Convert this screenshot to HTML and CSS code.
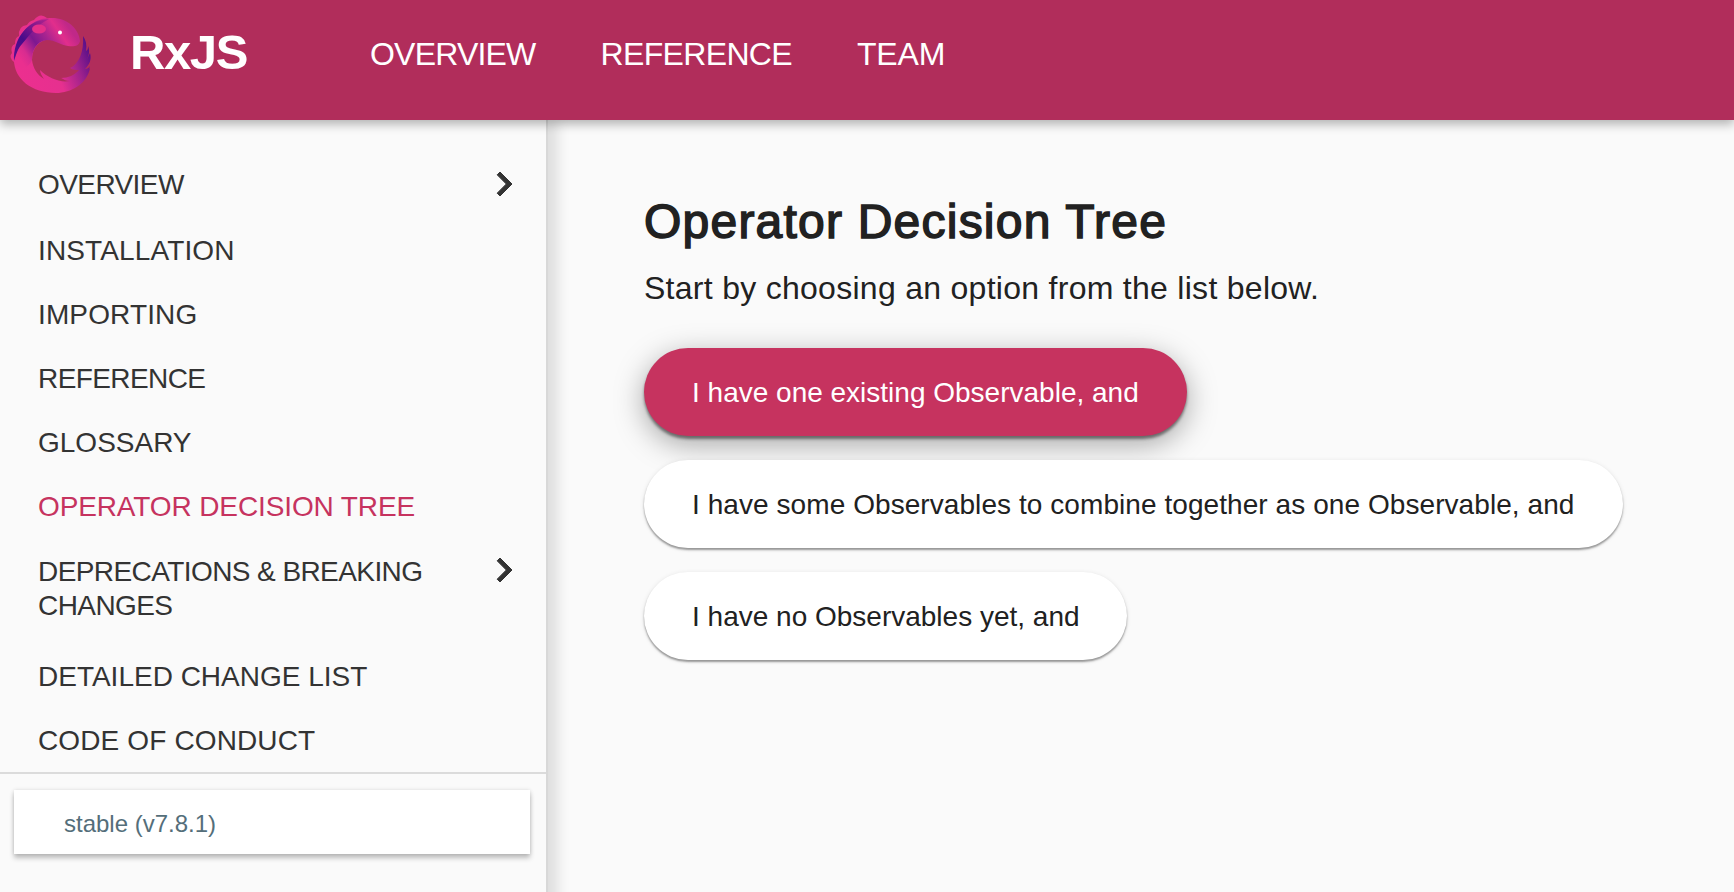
FILE: index.html
```html
<!DOCTYPE html>
<html lang="en">
<head>
<meta charset="utf-8">
<title>RxJS - Operator Decision Tree</title>
<link rel="stylesheet" href="styles.css">
</head>
<body>
<header class="topbar">
  <a class="brand">
    <svg class="brand-mark" width="96" height="92" viewBox="0 0 96 92">
      <defs>
        <linearGradient id="body" gradientUnits="userSpaceOnUse" x1="14" y1="66" x2="84" y2="40">
          <stop offset="0" stop-color="#ec2f8f"/><stop offset=".5" stop-color="#e6308f"/><stop offset=".78" stop-color="#a0228c"/><stop offset="1" stop-color="#5a1089"/>
        </linearGradient>
        <linearGradient id="back" gradientUnits="userSpaceOnUse" x1="10" y1="52" x2="46" y2="12">
          <stop offset="0" stop-color="#5a1090"/><stop offset=".4" stop-color="#470b8a"/><stop offset="1" stop-color="#b5248e"/>
        </linearGradient>
        <linearGradient id="head" gradientUnits="userSpaceOnUse" x1="20" y1="57" x2="68" y2="24">
          <stop offset="0" stop-color="#ea2f8f"/><stop offset=".14" stop-color="#d82c90"/><stop offset=".38" stop-color="#7c1890"/><stop offset=".6" stop-color="#a82490"/><stop offset=".82" stop-color="#e22e8c"/><stop offset="1" stop-color="#c02888"/>
        </linearGradient>
      </defs>
      <path fill="#e8308c" d="M10 54 Q4 49 8 45 Q6 38 11 36 Q11 29 15 28 Q14 18 23 17 Q25 13 30 12 Q36 4 43 10 L30 24 L12 50Z"/>
      <path fill="url(#body)" d="M10 52 C10 32 20 18 36 18 L50 31 C36 30 28 39 28 52 C29 60 33 67 40 71 C38 68 36 65 36 62 C44 70 56 75 66 73 C62 73 60 72 58 70 C70 71 80 67 86 60 C83 76 67 85 52 85 C28 85 10 71 10 52Z"/>
      <path fill="url(#body)" d="M57 70 C64 70 71 67 75 62 C72 62 69 62 66 60 C75 56 80 44 79 28 C82 32 83 37 82 43 C84 42 84 40 84 38 C86 43 85 47 83 51 L86 45 C88 52 85 57 81 61 C83 61 85 60 86 58 C83 71 72 75 57 70Z"/>
      <path fill="url(#head)" d="M10 54 C8 29 27 10 46 10 C62 9 75 20 76 33 C75 38 70 39 64 38 C57 37 51 32 43 32 C32 33 28 43 28 52 C24 62 14 62 10 54Z"/>
      <path fill="url(#back)" d="M10 53 C9 30 24 12 45 11 C31 18 27 26 18 36 C14 40 12 47 10 53Z"/>
      <ellipse cx="35" cy="21" rx="7" ry="4.500" fill="#e52f8b"/>
      <circle cx="56" cy="24.500" r="2" fill="#fff"/>
    </svg>
    <span class="brand-name">RxJS</span>
  </a>
  <nav class="topnav">
    <a class="t-overview">OVERVIEW</a>
    <a class="t-reference">REFERENCE</a>
    <a class="t-team">TEAM</a>
  </nav>
</header>
<div class="layout">
  <aside class="sidebar">
    <nav class="menu">
      <a class="item branch tight"><span>OVERVIEW</span><svg class="chevron" width="48" height="48" viewBox="0 0 24 24"><path d="M10 6L8.590 7.410 13.170 12l-4.580 4.590L10 18l6-6z"/></svg></a>
      <a class="item loose">INSTALLATION</a>
      <a class="item loose">IMPORTING</a>
      <a class="item tight">REFERENCE</a>
      <a class="item">GLOSSARY</a>
      <a class="item selected">OPERATOR DECISION TREE</a>
      <a class="item branch tall tight"><span>DEPRECATIONS &amp; BREAKING<br>CHANGES</span><svg class="chevron" width="48" height="48" viewBox="0 0 24 24"><path d="M10 6L8.590 7.410 13.170 12l-4.580 4.590L10 18l6-6z"/></svg></a>
      <a class="item">DETAILED CHANGE LIST</a>
      <a class="item loose">CODE OF CONDUCT</a>
    </nav>
    <div class="version"><div class="version-select">stable (v7.8.1)</div></div>
  </aside>
  <main class="content">
    <h1>Operator Decision Tree</h1>
    <p class="intro">Start by choosing an option from the list below.</p>
    <div class="options">
      <button class="option active">I have one existing Observable, and</button>
      <button class="option wide">I have some Observables to combine together as one Observable, and</button>
      <button class="option short">I have no Observables yet, and</button>
    </div>
  </main>
</div>
</body>
</html>
```
FILE: styles.css
```css
* { box-sizing: border-box; }
body {
  margin: 0;
  height: 892px;
  overflow: hidden;
  display: flex;
  flex-direction: column;
  background: #fafafa;
  color: #212121;
  font-family: "Liberation Sans", Arial, sans-serif;
}
.topbar {
  position: relative;
  z-index: 2;
  flex: none;
  height: 120px;
  display: flex;
  background: #b12d5b;
  color: #fff;
  box-shadow: 0 4px 10px rgba(0, 0, 0, .3);
}
.brand { display: flex; width: 370px; padding: 8px 0 0 4px; }
.brand-name { margin: 16px 0 0 30px; font-size: 49px; line-height: 56px; font-weight: 700; letter-spacing: -1.400px; }
.topnav { display: flex; gap: 65px; padding-top: 36px; font-size: 32px; line-height: 36px; }
.t-overview { letter-spacing: -.8px; }
.t-reference { letter-spacing: -.65px; }
.t-team { letter-spacing: -.2px; }
.layout { flex: 1; display: flex; min-height: 0; }
.sidebar {
  flex: none;
  width: 548px;
  margin-bottom: -40px;
  display: flex;
  flex-direction: column;
  border-right: 2px solid #d8d8d8;
  box-shadow: 10px 0 12px rgba(0, 0, 0, .11);
}
.menu { flex: none; height: 652px; padding-top: 33px; color: #333; }
.item {
  display: flex;
  height: 64px;
  padding: 16px 18px 0 38px;
  font-size: 28px;
  line-height: 32px;
}
.branch { height: 66px; justify-content: space-between; }
.tall { height: 106px; line-height: 34px; }
.tight { letter-spacing: -.58px; }
.loose { letter-spacing: .13px; }
.chevron { margin-top: -9px; fill: #333; stroke: #333; stroke-width: .5; }
.selected { color: #c6335f; letter-spacing: -.12px; }
.version { border-top: 2px solid #dbdbdb; padding: 16px 16px 0 14px; }
.version-select {
  height: 64px;
  padding-left: 50px;
  background: #fff;
  color: #546e7a;
  font-size: 24px;
  line-height: 68px;
  box-shadow: 0 4px 5px rgba(0, 0, 0, .24), 0 0 4px rgba(0, 0, 0, .12);
}
.content { padding: 73px 0 0 96px; }
h1 { margin: 0; font-size: 48px; line-height: 58px; font-weight: 400; -webkit-text-stroke: 1.500px #212121; letter-spacing: 1.220px; }
.intro { margin: 14px 0 0; font-size: 32px; line-height: 46px; letter-spacing: .28px; }
.options { margin-top: 37px; display: flex; flex-direction: column; align-items: flex-start; gap: 24px; }
.option {
  width: 543px;
  height: 88px;
  padding: 2px 0 0 48px;
  border: 0;
  border-radius: 44px;
  background: #fff;
  color: #212121;
  font: 28px/86px "Liberation Sans", Arial, sans-serif;
  text-align: left;
  white-space: nowrap;
  box-shadow: 0 2px 2px rgba(0, 0, 0, .36), 0 1px 5px rgba(0, 0, 0, .1);
}
.active {
  background: #c6335f;
  color: #fff;
  box-shadow: 0 3px 3px rgba(0, 0, 0, .45), 0 8px 30px rgba(0, 0, 0, .35);
}
.wide { width: 979px; letter-spacing: .07px; }
.short { width: 483px; }
```
